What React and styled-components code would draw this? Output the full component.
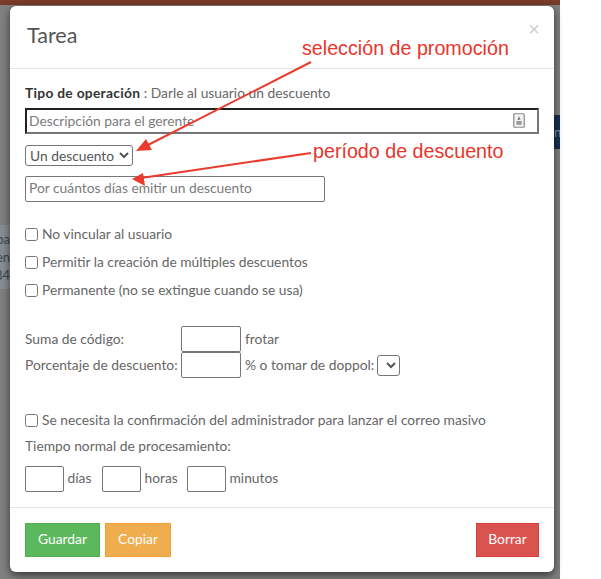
import React from 'react';
import styled, { createGlobalStyle } from 'styled-components';

const GlobalStyle = createGlobalStyle`
  html, body { margin: 0; padding: 0; background: #fff; }
  body { font-family: Lato, "Open Sans", sans-serif; }
`;

export default function App() {
  return (
    <Page>
      <GlobalStyle />
      <Backdrop>
        <TopBar />
        <LeftRow>
          <span>pa</span>
          <span>en</span>
          <span>84</span>
        </LeftRow>
        <RightBadge>n</RightBadge>
        <Modal>
          <Header>
            <Title>Tarea</Title>
            <Close>×</Close>
          </Header>
          <Body>
            <TypeLine><b>Tipo de operación</b> : Darle al usuario un descuento</TypeLine>
            <ManagerField>
              <ManagerInput placeholder="Descripción para el gerente" />
              <KeyIcon viewBox="0 0 12 15" aria-hidden="true">
                <rect x="0.75" y="0.75" width="10.5" height="13.5" rx="1" fill="#f2f2f2" stroke="#8a8a8a" strokeWidth="1.2" />
                <path d="M6 3.2 L7.6 6.8 H4.4 Z" fill="#777" />
                <rect x="3.4" y="8" width="5.2" height="3.8" fill="#999" />
              </KeyIcon>
            </ManagerField>
            <Select $width="108px"><option>Un descuento</option></Select>
            <DaysInput placeholder="Por cuántos días emitir un descuento" />

            <Checks>
              <CheckRow><Check type="checkbox" />No vincular al usuario</CheckRow>
              <CheckRow><Check type="checkbox" />Permitir la creación de múltiples descuentos</CheckRow>
              <CheckRow><Check type="checkbox" />Permanente (no se extingue cuando se usa)</CheckRow>
            </Checks>

            <Amounts>
              <AmountRow>
                <AmountLabel>Suma de código:</AmountLabel>
                <AmountInput />
                <Unit>frotar</Unit>
              </AmountRow>
              <AmountRow>
                <AmountLabel>Porcentaje de descuento:</AmountLabel>
                <AmountInput />
                <Unit>% o tomar de doppol:</Unit>
                <Select $width="23px" />
              </AmountRow>
            </Amounts>

            <ConfirmRow><Check type="checkbox" />Se necesita la confirmación del administrador para lanzar el correo masivo</ConfirmRow>
            <TimeLabel>Tiempo normal de procesamiento:</TimeLabel>
            <TimeRow>
              <TimeInput /><TimeUnit $width="34.5px">días</TimeUnit>
              <TimeInput /><TimeUnit $width="42.5px">horas</TimeUnit>
              <TimeInput /><TimeUnit>minutos</TimeUnit>
            </TimeRow>
          </Body>
          <Footer>
            <Button $bg="#5cb85c" $edge="#4cae4c" $width="75px">Guardar</Button>
            <Button $bg="#f0ad4e" $edge="#eea236" $width="66px">Copiar</Button>
            <Spacer />
            <Button $bg="#d9534f" $edge="#d43f3a" $width="63px">Borrar</Button>
          </Footer>
        </Modal>
        <Arrows viewBox="0 0 601 579" aria-hidden="true">
          <g stroke="#ea3b2e" strokeWidth="2" fill="#ea3b2e">
            <line x1="311" y1="62" x2="146" y2="146" />
            <polygon points="136,151 146,139 152,150" stroke="none" />
            <line x1="311" y1="153" x2="141" y2="178" />
            <polygon points="132,179 143,173 145,186" stroke="none" />
          </g>
        </Arrows>
        <Note $top="36px" $left="302px">selección de promoción</Note>
        <Note $top="139px" $left="313px">período de descuento</Note>
      </Backdrop>
    </Page>
  );
}

const Page = styled.div`
  width: 601px;
  height: 579px;
  overflow: hidden;
  background: #fff;
`;

const Backdrop = styled.div`
  position: relative;
  width: 560px;
  height: 579px;
  padding: 6px 0 0 10px;
  box-sizing: border-box;
  background: #808080;
`;

const TopBar = styled.div`
  position: absolute;
  top: 0;
  left: 0;
  right: 0;
  height: 5px;
  background: #7a3b28;
`;

const LeftRow = styled.div`
  position: absolute;
  top: 225px;
  left: 0;
  width: 10px;
  height: 64px;
  overflow: hidden;
  background: #878d93;
  color: #3b4650;
  font-size: 13px;
  line-height: 18px;
  display: flex;
  flex-direction: column;
  align-items: flex-end;
  justify-content: center;
`;

const RightBadge = styled.div`
  position: absolute;
  top: 115px;
  left: 554px;
  width: 6px;
  height: 34px;
  overflow: hidden;
  background: #16324f;
  color: #8a97a5;
  font-size: 13px;
  line-height: 34px;
`;

const Modal = styled.div`
  position: relative;
  width: 544px;
  height: 566px;
  background: #fff;
  border-radius: 6px;
  box-shadow: 0 3px 9px rgba(0, 0, 0, 0.6);
  display: flex;
  flex-direction: column;
  color: #666;
  font-size: 13.8px;
`;

const Header = styled.div`
  position: relative;
  height: 62px;
  box-sizing: content-box;
  border-bottom: 1px solid #e5e5e5;
`;

const Title = styled.h4`
  margin: 0;
  padding: 16px 0 0 17px;
  font-size: 21.5px;
  line-height: 26px;
  font-weight: 400;
  color: #555;
`;

const Close = styled.span`
  position: absolute;
  top: 13px;
  right: 14px;
  font-family: "Liberation Sans", sans-serif;
  font-size: 20px;
  line-height: 20px;
  color: #cfcfcf;
`;

const Body = styled.div`
  flex: 1;
  padding: 15px 15px 0;
  display: flex;
  flex-direction: column;
  align-items: flex-start;
`;

const TypeLine = styled.div`
  line-height: 18px;
  margin-bottom: 6px;
  b { color: #333; font-weight: 700; letter-spacing: 0.28px; }
`;

const ManagerField = styled.div`
  position: relative;
  width: 514px;
  height: 26px;
  margin-bottom: 11px;
`;

const ManagerInput = styled.input`
  width: 100%;
  height: 100%;
  box-sizing: border-box;
  padding: 0 2px 2px;
  border: 2px inset #767676;
  font: 13.8px Lato, sans-serif;
  &::placeholder { color: #7b7b7b; }
`;

const KeyIcon = styled.svg`
  position: absolute;
  top: 5px;
  right: 14px;
  width: 12px;
  height: 15px;
`;

const Select = styled.select`
  width: ${(p) => p.$width};
  height: 21px;
  box-sizing: border-box;
  background: #fff;
  border: 1px solid #767676;
  border-radius: 3px;
  color: #555;
  font: 13.8px Lato, sans-serif;
`;

const DaysInput = styled.input`
  width: 300px;
  height: 26px;
  margin-top: 10px;
  box-sizing: border-box;
  padding: 0 3px 4px;
  border: 1px solid #767676;
  border-radius: 2px;
  font: 13.8px Lato, sans-serif;
  &::placeholder { color: #7b7b7b; }
`;

const Checks = styled.div`
  margin-top: 23px;
  display: flex;
  flex-direction: column;
  gap: 10px;
`;

const CheckRow = styled.label`
  display: flex;
  align-items: center;
  height: 18px;
  line-height: 18px;
`;

const Check = styled.input`
  width: 13px;
  height: 13px;
  margin: 0 4px 0 0;
  flex: none;
`;

const Amounts = styled.div`
  margin-top: 27px;
  display: flex;
  flex-direction: column;
`;

const AmountRow = styled.div`
  display: flex;
  align-items: center;
  height: 26px;
`;

const AmountLabel = styled.span`
  width: 156px;
  padding-bottom: 2px;
  white-space: nowrap;
`;

const AmountInput = styled.input`
  width: 60px;
  height: 26px;
  box-sizing: border-box;
  border: 1px solid #767676;
  border-radius: 2px;
  margin-right: 4px;
`;

const Unit = styled.span`
  margin-right: 3px;
  padding-bottom: 2px;
`;

const ConfirmRow = styled(CheckRow)`
  margin-top: 33px;
`;

const TimeLabel = styled.div`
  margin-top: 8px;
  line-height: 18px;
`;

const TimeRow = styled.div`
  margin-top: 11px;
  display: flex;
  align-items: center;
`;

const TimeInput = styled.input`
  width: 39px;
  height: 26px;
  box-sizing: border-box;
  border: 1px solid #767676;
  border-radius: 2px;
  margin-right: 3.5px;
`;

const TimeUnit = styled.span`
  width: ${(p) => p.$width || 'auto'};
  padding-bottom: 3px;
`;

const Footer = styled.div`
  height: 34px;
  padding: 15px;
  box-sizing: content-box;
  border-top: 1px solid #e5e5e5;
  display: flex;
  align-items: flex-start;
  gap: 5px;
`;

const Spacer = styled.div`
  flex: 1;
`;

const Button = styled.button`
  width: ${(p) => p.$width};
  height: 34px;
  padding: 0 0 4px;
  background: ${(p) => p.$bg};
  border: 1px solid ${(p) => p.$edge};
  color: #fff;
  font: 13.8px Lato, sans-serif;
`;

const Arrows = styled.svg`
  position: absolute;
  top: 0;
  left: 0;
  width: 601px;
  height: 579px;
  pointer-events: none;
`;

const Note = styled.div`
  position: absolute;
  top: ${(p) => p.$top};
  left: ${(p) => p.$left};
  font-family: "Liberation Sans", sans-serif;
  font-size: 19.7px;
  line-height: 24px;
  color: #e8352b;
  white-space: nowrap;
`;
